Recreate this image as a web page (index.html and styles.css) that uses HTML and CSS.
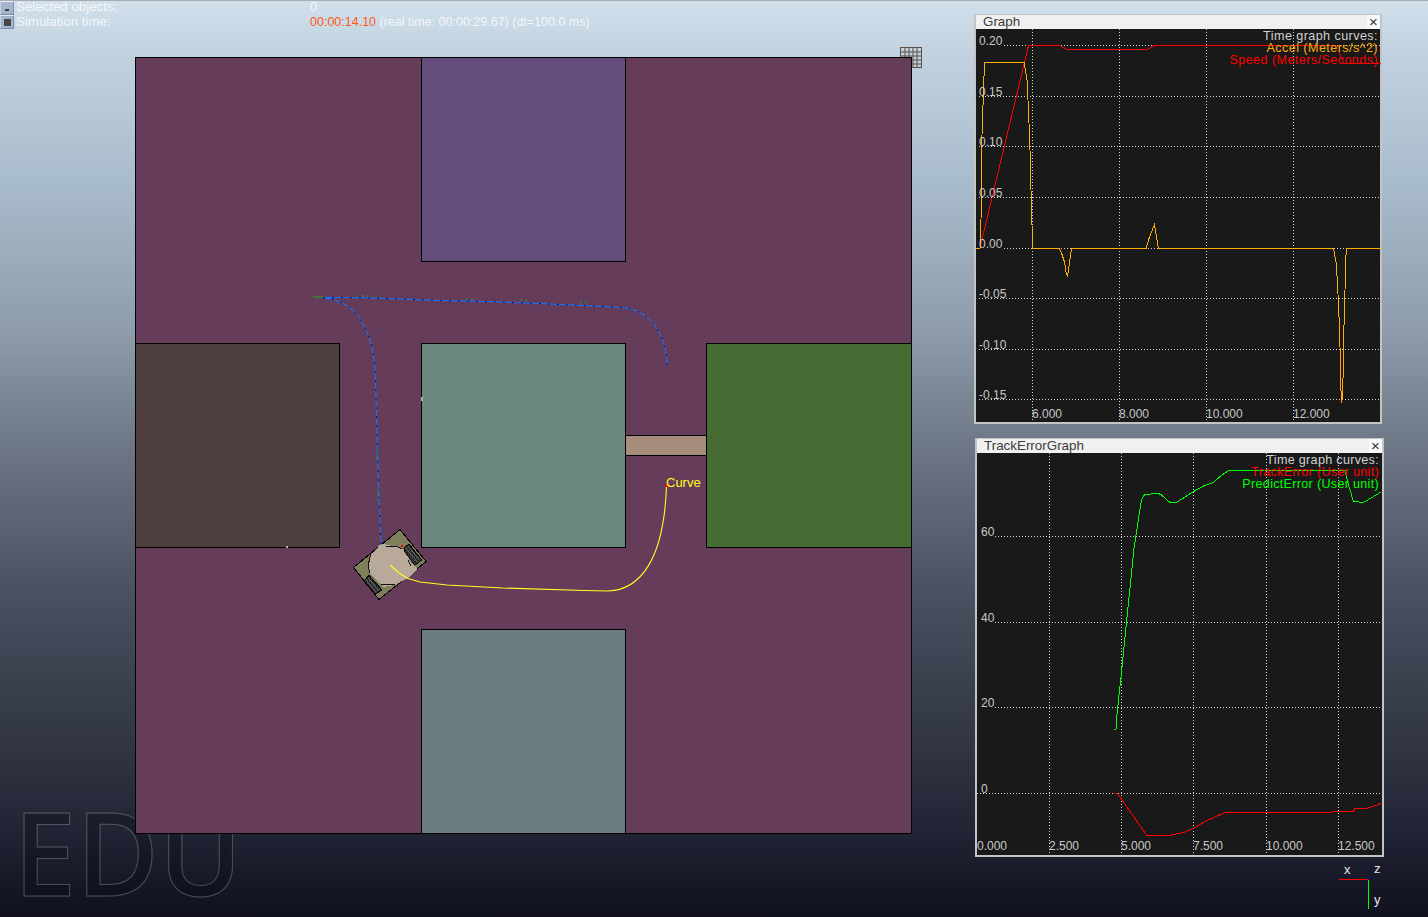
FILE: index.html
```html
<!DOCTYPE html>
<html lang="en">
<head>
<meta charset="utf-8">
<title>Simulation</title>
<link rel="stylesheet" href="styles.css">
</head>
<body>
<main class="desktop">
  <section class="status">
    <div class="status-row">
      <span class="tool-btn"><span class="tool-min"></span></span>
      <span class="status-label">Selected objects:</span>
      <span class="status-value">0</span>
    </div>
    <div class="status-row status-row-time">
      <span class="tool-btn"><span class="tool-stop"></span></span>
      <span class="status-label">Simulation time:</span>
      <span class="status-value"><span class="sim-time">00:00:14.10</span> (real time: 00:00:29.67) (dt=100.0 ms)</span>
    </div>
  </section>

  <svg class="scene" width="1428" height="917" viewBox="0 0 1428 917" xmlns="http://www.w3.org/2000/svg">
    <defs>
      <pattern id="tread" width="3" height="3" patternUnits="userSpaceOnUse" patternTransform="rotate(-39)">
        <rect width="3" height="3" fill="#161616"/>
        <rect width="1" height="3" fill="#7a7a7a"/>
        <rect width="3" height="1" fill="#4a4a4a"/>
      </pattern>
    </defs>
    <text class="edu" x="13.5" y="896" textLength="229" lengthAdjust="spacingAndGlyphs">EDU</text>
    <g class="mini-grid">
      <path d="M900.5 47v21M905 47v21M909 47v21M913 47v21M917 47v21M921.5 47v21M900 47.5h22M900 52h22M900 56h22M900 60h22M900 64h22M900 67.5h22"/>
    </g>
    <g class="plan">
      <rect class="floor" x="135.5" y="57.5" width="776" height="776"/>
      <rect class="r-purple" x="421.5" y="57.5" width="204" height="204"/>
      <rect class="r-brown" x="135.5" y="343.5" width="204" height="204"/>
      <rect class="r-teal" x="421.5" y="343.5" width="204" height="204"/>
      <rect class="r-green" x="706.5" y="343.5" width="205" height="204"/>
      <rect class="r-slate" x="421.5" y="629.5" width="204" height="204"/>
      <rect class="r-bridge" x="625.5" y="435.5" width="81" height="20"/>
    </g>
    <rect class="speck" x="421" y="397" width="2" height="4"/>
    <rect class="speck" x="286" y="546" width="2" height="2"/>
    <g class="robot">
      <polygon class="chassis" points="400,529.5 426,561.5 379,599.5 353.5,567.5"/>
      <polygon class="disc" points="381,543.5 390,545.5 398,546 402,549 405,548 411,563 417,569 408,578 395,585 383,587 370,573 368,566 371,555"/>
      <polyline class="disc-edge" points="386,546 397,546.5 402,549"/>
      <polyline class="disc-edge" points="370,573 368,566 371,553"/>
      <polyline class="disc-edge" points="381,584 395,585"/>
      <polyline class="disc-edge" points="408,560 411,566"/>
      <polygon class="wheel" points="409,544 421.5,560 415,565 405,552 404,548"/>
      <polygon class="wheel" points="369,575.5 382,590 375,594 364,581"/>
      <rect class="red-dot" x="401" y="545" width="2" height="2"/>
    </g>
    <g class="paths">
      <polyline class="trail-stub" points="313,297 323,297"/>
      <path class="trail" d="M323 297.5L360 297.7L403 299L440 300.5L493 301.7L543 303.7L587 305.7L623 307.7C650 310 667 335 667 365"/>
      <path class="trail-dash" d="M323 297.5L360 297.7L403 299L440 300.5L493 301.7L543 303.7L587 305.7L623 307.7C650 310 667 335 667 365"/>
      <path class="trail" d="M323 298C350 300 374 320 375.5 380L377.5 453L379 500L381 545"/>
      <path class="trail-dash" d="M323 298C350 300 374 320 375.5 380L377.5 453L379 500L381 545"/>
      <path class="trail-specks" d="M362 296h10M466 299h8M520 300h8M580 302h8M377 452v8M378 488v12"/>
      <path class="curve" d="M390 565L399 573L408 578.5L420 582L447 585L503 588L585 590.5L608 591C640 590 664 560 666.5 486"/>
      <rect class="red-dot" x="665" y="484" width="3" height="3"/>
      <text class="curve-label" x="666" y="487">Curve</text>
    </g>
    <g class="axes">
      <line class="axis-x" x1="1339" y1="879.5" x2="1368" y2="879.5"/>
      <line class="axis-y" x1="1368.5" y1="880" x2="1368.5" y2="909"/>
      <line class="axis-z" x1="1368.5" y1="877" x2="1368.5" y2="880"/>
      <text class="axis-text" x="1344" y="874">x</text>
      <text class="axis-text" x="1374" y="873">z</text>
      <text class="axis-text" x="1374" y="904">y</text>
    </g>
    <polygon class="tread" points="409,544 421.5,560 415,565 405,552 404,548"/>
    <polygon class="tread" points="369,575.5 382,590 375,594 364,581"/>
  </svg>

  <article class="graph-window graph-speed">
    <header class="graph-title"><span>Graph</span><span class="graph-close">×</span></header>
    <svg class="plot" width="405" height="392" viewBox="975 29 405 392" xmlns="http://www.w3.org/2000/svg">
      <path class="grid" d="M1031.5 29v392M1118.5 29v392M1205.5 29v392M1292.5 29v392M1003 45.5h377M978 96.5h402M978 146.5h402M978 197.5h402M1003 248.5h377M978 298.5h402M978 349.5h402M978 399.5h402"/>
      <polyline class="line-red" points="975,248 979,248 1027.5,45.5 1058,45.5 1065,49 1147,49 1153.5,45.5 1333,45.5 1338,47 1338,53 1343,63 1380,63"/>
      <polyline class="line-orange" points="975,248.5 979,248.5 980,220 981,135 983.5,62 1016.5,62 1023,62.5 1026,80 1027.5,110 1029,150 1030,190 1031,225 1031.5,248.5 1058,248.5 1060.5,253 1063.5,262 1065,272 1066.5,277 1068.5,262 1070.5,248.5 1145,248.5 1148.5,237 1153.5,224.5 1157.5,248.5 1332.5,248.5 1335,262 1336.5,283 1338,317 1339,347 1339.5,378 1340.5,403 1341.5,397 1342.5,360 1343,325 1344,290 1345,255 1345.5,248.5 1380,248.5"/>
      <g class="tick-labels">
        <text x="978" y="45">0.20</text><text x="978" y="96">0.15</text><text x="978" y="146">0.10</text><text x="978" y="197">0.05</text><text x="978" y="248">0.00</text><text x="978" y="298">-0.05</text><text x="978" y="349">-0.10</text><text x="978" y="399">-0.15</text>
        <text x="1031" y="418">6.000</text><text x="1118" y="418">8.000</text><text x="1205" y="418">10.000</text><text x="1292" y="418">12.000</text>
      </g>
      <g class="legend">
        <text class="legend-head" x="1377" y="40">Time graph curves:</text>
        <text class="legend-orange" x="1377" y="52">Accel (Meters/s^2)</text>
        <text class="legend-red" x="1377" y="64">Speed (Meters/Seconds)</text>
      </g>
    </svg>
  </article>

  <article class="graph-window graph-error">
    <header class="graph-title"><span>TrackErrorGraph</span><span class="graph-close">×</span></header>
    <svg class="plot" width="404" height="400" viewBox="977 453 404 400" xmlns="http://www.w3.org/2000/svg">
      <path class="grid" d="M1049.5 453v400M1121.5 453v400M1193.5 453v400M1266.5 453v400M1338.5 453v400M995 536.5h386M995 622.5h386M995 707.5h386M977 793.5h404"/>
      <polyline class="line-green" points="1113.5,729.5 1116,729.5 1116.5,719 1118.5,700 1120.5,682 1122.5,662 1126.5,622 1131,578 1134,548 1136.5,532 1139.5,512 1141.5,500 1144.5,494.5 1158.5,493.5 1161.5,495 1170,502.5 1176.5,502.5 1193.5,491.5 1203.5,486 1213.5,482.5 1220,476.5 1228.5,470.5 1345,470.5 1348.5,485 1353.5,501.5 1363.5,502.5 1381,492"/>
      <polyline class="line-red" points="1113.5,793.5 1117.5,793.5 1146.5,835 1171.5,835 1183.5,832.5 1193.5,828.5 1205,821.5 1225,812.5 1310,812.5 1353.5,811.5 1355,808.5 1368.5,808 1381,803.5"/>
      <g class="tick-labels">
        <text x="981" y="536">60</text><text x="981" y="622">40</text><text x="981" y="707">20</text><text x="981" y="793">0</text>
        <text x="977" y="850">0.000</text><text x="1049" y="850">2.500</text><text x="1121" y="850">5.000</text><text x="1193" y="850">7.500</text><text x="1266" y="850">10.000</text><text x="1338" y="850">12.500</text>
      </g>
      <g class="legend legend-wide">
        <text class="legend-head" x="1379" y="464">Time graph curves:</text>
        <text class="legend-red" x="1379" y="476">TrackError (User unit)</text>
        <text class="legend-green" x="1379" y="488">PredictError (User unit)</text>
      </g>
    </svg>
  </article>
</main>
</body>
</html>
```

FILE: styles.css
```css
* { box-sizing: border-box; }

html, body {
  margin: 0;
  height: 100%;
  overflow: hidden;
}

body {
  background: #000;
  font-family: "Liberation Sans", Arial, sans-serif;
}

.desktop {
  position: relative;
  width: 1428px;
  height: 917px;
  overflow: hidden;
  border-top: 1px solid #a9acae;
  background: linear-gradient(180deg,
    #d0dfeb 0,
    #c0d0de 60px,
    #a9bccb 180px,
    #8e9cab 330px,
    #6f7887 440px,
    #4b5160 590px,
    #2c303f 770px,
    #1f2232 840px,
    #10101e 917px);
}

.status {
  position: relative;
  z-index: 2;
  display: flex;
  flex-direction: column;
  line-height: 14px;
  color: #f4f7f9;
}

.status-row {
  display: flex;
  align-items: center;
  height: 14px;
}

.tool-btn {
  width: 14px;
  height: 14px;
  flex: none;
  display: flex;
  align-items: center;
  justify-content: center;
  background: #a5b5d0;
  border: 1px solid #7d8da8;
  border-top-color: #e8eef5;
  border-left-color: #c6d2e2;
}

.tool-min {
  width: 4px;
  height: 2px;
  margin-top: 4px;
  background: #444;
}

.tool-stop {
  width: 7px;
  height: 7px;
  background: #484848;
}

.status-label {
  width: 296px;
  margin-top: -2px;
  padding-left: 2px;
  flex: none;
  font-size: 13.3px;
}

.status-value {
  margin-top: -2px;
  font-size: 12.5px;
  white-space: pre;
}

.status-row-time .status-label,
.status-row-time .status-value {
  margin-top: 0;
}

.sim-time {
  color: #ff5a10;
}

.scene {
  position: absolute;
  left: 0;
  top: -1px;
}

.edu {
  font-family: "Open Sans", sans-serif;
  font-weight: 600;
  font-size: 116px;
  fill: rgba(8, 8, 16, 0.28);
  stroke: rgba(255, 255, 255, 0.24);
  stroke-width: 1;
}

.mini-grid path {
  fill: none;
  stroke: #5b4d47;
  stroke-width: 1;
}

.plan rect {
  stroke: #000;
  stroke-width: 1;
}

.floor { fill: #653d5b; }
.r-purple { fill: #624d7d; }
.r-brown { fill: #4f3f3e; }
.r-teal { fill: #6a887b; }
.r-green { fill: #476c33; }
.r-slate { fill: #6b7d80; }
.r-bridge { fill: #a58c7b; }

.speck { fill: #b0b0b0; }

.chassis {
  fill: #807f5c;
  stroke: #000;
  stroke-width: 1;
  shape-rendering: crispEdges;
}

.disc {
  fill: #b9a99a;
  shape-rendering: crispEdges;
}

.disc-edge {
  fill: none;
  stroke: #111;
  stroke-width: 1;
  shape-rendering: crispEdges;
}

.wheel {
  fill: #161616;
  stroke: #000;
  shape-rendering: crispEdges;
}

.tread {
  fill: url(#tread);
  stroke: #000;
  stroke-width: 1;
}

.red-dot { fill: #f00; }

.trail, .trail-dash, .trail-stub, .trail-specks, .curve,
.grid, .line-red, .line-orange, .line-green {
  fill: none;
}

.grid, .line-red, .line-orange, .line-green {
  shape-rendering: crispEdges;
}

.trail {
  stroke: #1478ff;
  stroke-width: 1;
}

.trail-dash {
  stroke: #0a0a7a;
  stroke-width: 1;
  stroke-dasharray: 2 7;
}

.trail-stub {
  stroke: #14b414;
  stroke-width: 1;
}

.trail-specks {
  stroke: #14b414;
  stroke-width: 1;
  stroke-dasharray: 2 3;
}

.curve {
  stroke: #ffff1e;
  stroke-width: 1.1;
}

.curve-label {
  font-size: 13px;
  fill: #ffff1e;
}

.axis-x { stroke: #f00; }
.axis-y { stroke: #0f0; }
.axis-z { stroke: #00f; }

.axis-text {
  font-size: 13px;
  fill: #e6e6e6;
}

.graph-window {
  position: absolute;
  display: flex;
  flex-direction: column;
  background: #191919;
  border: 2px solid #c4c4c4;
  border-top-width: 1px;
}

.graph-speed {
  left: 974px;
  top: 13px;
  width: 408px;
  height: 410px;
}

.graph-error {
  left: 975px;
  top: 437px;
  width: 409px;
  height: 419px;
}

.graph-title {
  height: 14px;
  flex: none;
  display: flex;
  justify-content: space-between;
  align-items: flex-start;
  padding-left: 7px;
  background: #f0f0f0;
  font-size: 13.4px;
  line-height: 13px;
  color: #3c3c3c;
}

.graph-close {
  width: 13px;
  height: 14px;
  text-align: center;
  line-height: 13px;
  font-size: 15px;
  color: #333;
  background: #fafafa;
}

.plot {
  display: block;
  flex: none;
}

.grid {
  stroke: #d4d4d4;
  stroke-width: 1;
  stroke-dasharray: 1 2;
}

.line-red { stroke: #f00; stroke-width: 1; }
.line-orange { stroke: #ffae00; stroke-width: 1; }
.line-green { stroke: #0f0; stroke-width: 1; }

.tick-labels text {
  font-size: 12px;
  fill: #c8c8c8;
}

.legend text {
  font-size: 12.6px;
  letter-spacing: 0.42px;
  text-anchor: end;
}

.legend-wide text {
  letter-spacing: 0.3px;
}

.legend-head { fill: #d2d2d2; }
.legend-orange { fill: #ffae00; }
.legend-red { fill: #f00; }
.legend-green { fill: #0f0; }
```
